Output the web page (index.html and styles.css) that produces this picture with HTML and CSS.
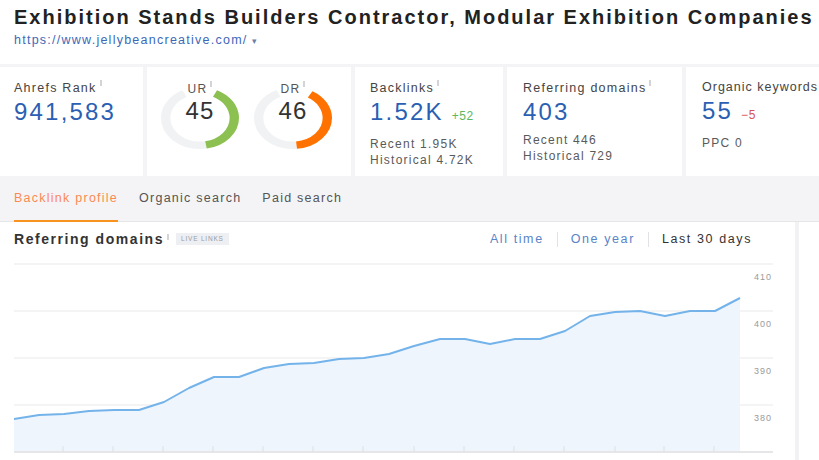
FILE: index.html
```html
<!DOCTYPE html>
<html lang="en">
<head>
<meta charset="utf-8">
<title>Site Explorer overview</title>
<link rel="stylesheet" href="styles.css">
</head>
<body>
<header class="head">
  <h1 class="title">Exhibition Stands Builders Contractor, Modular Exhibition Companies</h1>
  <div class="url">https://www.jellybeancreative.com/<span class="caret">▾</span></div>
</header>

<section class="overview">
  <div class="stats">
    <div class="card card-rank">
      <div class="label">Ahrefs Rank<span class="tip"></span></div>
      <div class="value">941,583</div>
    </div>

    <div class="card card-ratings">
      <div class="donut">
        <svg class="ring" viewBox="0 0 100 100" preserveAspectRatio="none">
          <circle cx="50" cy="50" r="44" pathLength="360" class="track" stroke-dasharray="163 197" stroke-dashoffset="-170" transform="rotate(-90 50 50)"/>
          <circle cx="50" cy="50" r="44" pathLength="360" class="arc-green" stroke-dasharray="144 216" stroke-dashoffset="-26" transform="rotate(-90 50 50)"/>
        </svg>
        <div class="donut-label">UR<span class="tip"></span></div>
        <div class="donut-value">45</div>
      </div>
      <div class="donut">
        <svg class="ring" viewBox="0 0 100 100" preserveAspectRatio="none">
          <circle cx="50" cy="50" r="44" pathLength="360" class="track" stroke-dasharray="161 199" stroke-dashoffset="-174" transform="rotate(-90 50 50)"/>
          <circle cx="50" cy="50" r="44" pathLength="360" class="arc-orange" stroke-dasharray="144 216" stroke-dashoffset="-30" transform="rotate(-90 50 50)"/>
        </svg>
        <div class="donut-label">DR<span class="tip"></span></div>
        <div class="donut-value">46</div>
      </div>
    </div>

    <div class="card card-backlinks">
      <div class="label">Backlinks<span class="tip"></span></div>
      <div class="value">1.52K<span class="delta up">+52</span></div>
      <div class="sub">Recent 1.95K</div>
      <div class="sub">Historical 4.72K</div>
    </div>

    <div class="card card-domains">
      <div class="label">Referring domains<span class="tip"></span></div>
      <div class="value">403</div>
      <div class="sub">Recent 446</div>
      <div class="sub">Historical 729</div>
    </div>

    <div class="card card-keywords">
      <div class="label">Organic keywords</div>
      <div class="value">55<span class="delta down">−5</span></div>
      <div class="sub">PPC 0</div>
    </div>
  </div>

  <nav class="tabs">
    <span class="tab active">Backlink profile</span>
    <span class="tab">Organic search</span>
    <span class="tab">Paid search</span>
  </nav>
</section>

<main class="content">
  <div class="panel">
    <div class="panel-head">
      <div class="panel-title">
        <h2>Referring domains</h2><span class="tip"></span>
        <span class="badge">Live links</span>
      </div>
      <div class="ranges">
        <span class="range link">All time</span>
        <span class="sep"></span>
        <span class="range link">One year</span>
        <span class="sep"></span>
        <span class="range current">Last 30 days</span>
      </div>
    </div>
    <svg class="chart" viewBox="14 256 765 204" width="765" height="204">
      <g class="grid">
        <line x1="14" y1="264" x2="773" y2="264"/>
        <line x1="14" y1="311" x2="773" y2="311"/>
        <line x1="14" y1="358" x2="773" y2="358"/>
        <line x1="14" y1="405" x2="773" y2="405"/>
      </g>
      <polygon class="area" points="14,452 14,419 39,415 64,414 89,411 114,410 139,410 164,402 189,388 214,377 239,377 264,368 289,364 314,363 339,359 364,358 389,354 414,346 440,339 465,339 490,344 515,339 540,339 565,331 590,316 615,312 640,311 665,316 690,311 715,311 740,298 740,452"/>
      <polyline class="line" points="14,419 39,415 64,414 89,411 114,410 139,410 164,402 189,388 214,377 239,377 264,368 289,364 314,363 339,359 364,358 389,354 414,346 440,339 465,339 490,344 515,339 540,339 565,331 590,316 615,312 640,311 665,316 690,311 715,311 740,298"/>
      <line class="axis" x1="14" y1="452" x2="773" y2="452"/>
      <g class="ticks">
        <line x1="63" y1="446" x2="63" y2="452"/>
        <line x1="113" y1="446" x2="113" y2="452"/>
        <line x1="163" y1="446" x2="163" y2="452"/>
        <line x1="213" y1="446" x2="213" y2="452"/>
        <line x1="263" y1="446" x2="263" y2="452"/>
        <line x1="313" y1="446" x2="313" y2="452"/>
        <line x1="363" y1="446" x2="363" y2="452"/>
        <line x1="414" y1="446" x2="414" y2="452"/>
        <line x1="464" y1="446" x2="464" y2="452"/>
        <line x1="514" y1="446" x2="514" y2="452"/>
        <line x1="564" y1="446" x2="564" y2="452"/>
        <line x1="615" y1="446" x2="615" y2="452"/>
        <line x1="664" y1="446" x2="664" y2="452"/>
        <line x1="714" y1="446" x2="714" y2="452"/>
      </g>
      <g class="ylabels">
        <text x="754" y="280">410</text>
        <text x="754" y="327">400</text>
        <text x="754" y="374">390</text>
        <text x="754" y="421">380</text>
      </g>
    </svg>
  </div>
</main>
</body>
</html>
```

FILE: styles.css
```css
* { box-sizing: border-box; }

html, body {
  margin: 0;
  background: #ffffff;
}

body {
  font-family: "Liberation Sans", Arial, sans-serif;
  font-size: 12.5px;
  color: #333;
  letter-spacing: 1.25px;
  overflow: hidden;
}

/* ---------- header ---------- */
.head {
  padding: 5px 14px 15px;
}

.title {
  margin: 0;
  font-size: 20px;
  line-height: 24px;
  font-weight: bold;
  color: #222;
  letter-spacing: 2px;
  white-space: nowrap;
}

.url {
  margin-top: 4px;
  font-size: 12.5px;
  line-height: 15px;
  color: #3d68b8;
  letter-spacing: 1.25px;
}

.caret {
  margin-left: 4px;
  font-size: 9px;
  color: #6b7fa8;
}

/* ---------- overview band ---------- */
.overview {
  background: #f4f4f6;
  padding-top: 3px;
}

.stats {
  display: flex;
  gap: 4px;
  height: 109px;
}

.card {
  background: #fff;
  padding: 13px 15px;
}

.card-rank { width: 143px; padding-left: 14px; }
.card-ratings {
  width: 204px;
  display: flex;
  gap: 15px;
  padding: 20px 14px 0;
}
.card-backlinks { width: 148px; }
.card-domains { width: 175px; padding-left: 16px; }
.card-keywords { flex: 1; padding-left: 16px; padding-right: 0; white-space: nowrap; overflow: hidden; }
.card-keywords .label { letter-spacing: 1px; }

.label {
  font-size: 12.5px;
  line-height: 15px;
  color: #444;
  white-space: nowrap;
}

.tip {
  display: inline-block;
  width: 2px;
  height: 6px;
  background: #d4d4d8;
  margin-left: 3px;
  vertical-align: 6px;
}

.value {
  margin-top: 2px;
  font-size: 24px;
  line-height: 28px;
  color: #2b5fb3;
  letter-spacing: 2.2px;
  white-space: nowrap;
}

.delta {
  margin-left: 8px;
  font-size: 12px;
  letter-spacing: 0.6px;
}
.delta.up { color: #5cb85c; }
.delta.down { color: #d9534f; }

.sub {
  font-size: 12px;
  line-height: 16px;
  color: #5a5a5a;
  letter-spacing: 1.25px;
  white-space: nowrap;
}
.value + .sub { margin-top: 6px; }

/* donuts */
.donut {
  position: relative;
  width: 78px;
  height: 62px;
}

.ring {
  display: block;
  width: 78px;
  height: 62px;
}

.ring circle {
  fill: none;
  stroke-width: 12;
}
.ring .track { stroke: #f1f2f4; }
.ring .arc-green { stroke: #8cc152; }
.ring .arc-orange { stroke: #ff7200; }

.donut-label {
  position: absolute;
  left: 0;
  right: 0;
  top: -6px;
  text-align: center;
  font-size: 12px;
  line-height: 15px;
  color: #555;
}

.donut-value {
  position: absolute;
  left: 0;
  right: 0;
  top: 10px;
  text-align: center;
  font-size: 24px;
  line-height: 28px;
  color: #333;
  letter-spacing: 1.2px;
}

/* tabs */
.tabs {
  display: flex;
  gap: 21px;
  padding: 0 14px;
  border-bottom: 1px solid #e6e6e9;
}

.tab {
  padding: 15px 0 14px;
  font-size: 12.5px;
  line-height: 15px;
  color: #555;
  letter-spacing: 1.25px;
  border-bottom: 2px solid transparent;
  margin-bottom: -1px;
}

.tab.active {
  color: #fb8a52;
  border-bottom-color: #f7931e;
}

/* ---------- content ---------- */
.content {
  display: flex;
}

.panel {
  width: 799px;
  border-right: 4px solid #f2f2f4;
  height: 240px;
}

.panel-head {
  display: flex;
  align-items: center;
  justify-content: space-between;
  height: 18px;
  margin: 8px 0 0;
  padding: 0 43px 0 14px;
}

.panel-title {
  display: flex;
  align-items: center;
}

.panel-title h2 {
  margin: 0;
  font-size: 14px;
  line-height: 17px;
  font-weight: bold;
  color: #333;
  letter-spacing: 1.55px;
}

.panel-title .tip {
  vertical-align: baseline;
  margin: -4px 0 0 3px;
}

.badge {
  margin-left: 7px;
  height: 12px;
  padding: 0 5px;
  background: #edeff3;
  color: #9a9ca3;
  font-size: 6.5px;
  line-height: 12px;
  text-transform: uppercase;
  letter-spacing: 0.8px;
}

.ranges {
  display: flex;
  align-items: center;
  gap: 13px;
}

.range {
  font-size: 12.5px;
  line-height: 15px;
  letter-spacing: 1.6px;
}
.range.link { color: #5a84c8; }
.range.current { color: #333; }

.sep {
  width: 1px;
  height: 15px;
  background: #e2e2e6;
}

.chart {
  display: block;
  margin: 8px 0 0 14px;
}

.chart .grid line {
  stroke: #f0f0f2;
  stroke-width: 1.5;
}

.chart .area { fill: #eef5fd; }

.chart .line {
  fill: none;
  stroke: #74b3ea;
  stroke-width: 2;
  stroke-linejoin: round;
}

.chart .axis {
  stroke: #e6e6e8;
  stroke-width: 2;
}

.chart .ticks line {
  stroke: #e0e0e3;
  stroke-width: 1;
}

.chart .ylabels text {
  font-size: 9px;
  fill: #9a9a9a;
  letter-spacing: 1px;
}
```
